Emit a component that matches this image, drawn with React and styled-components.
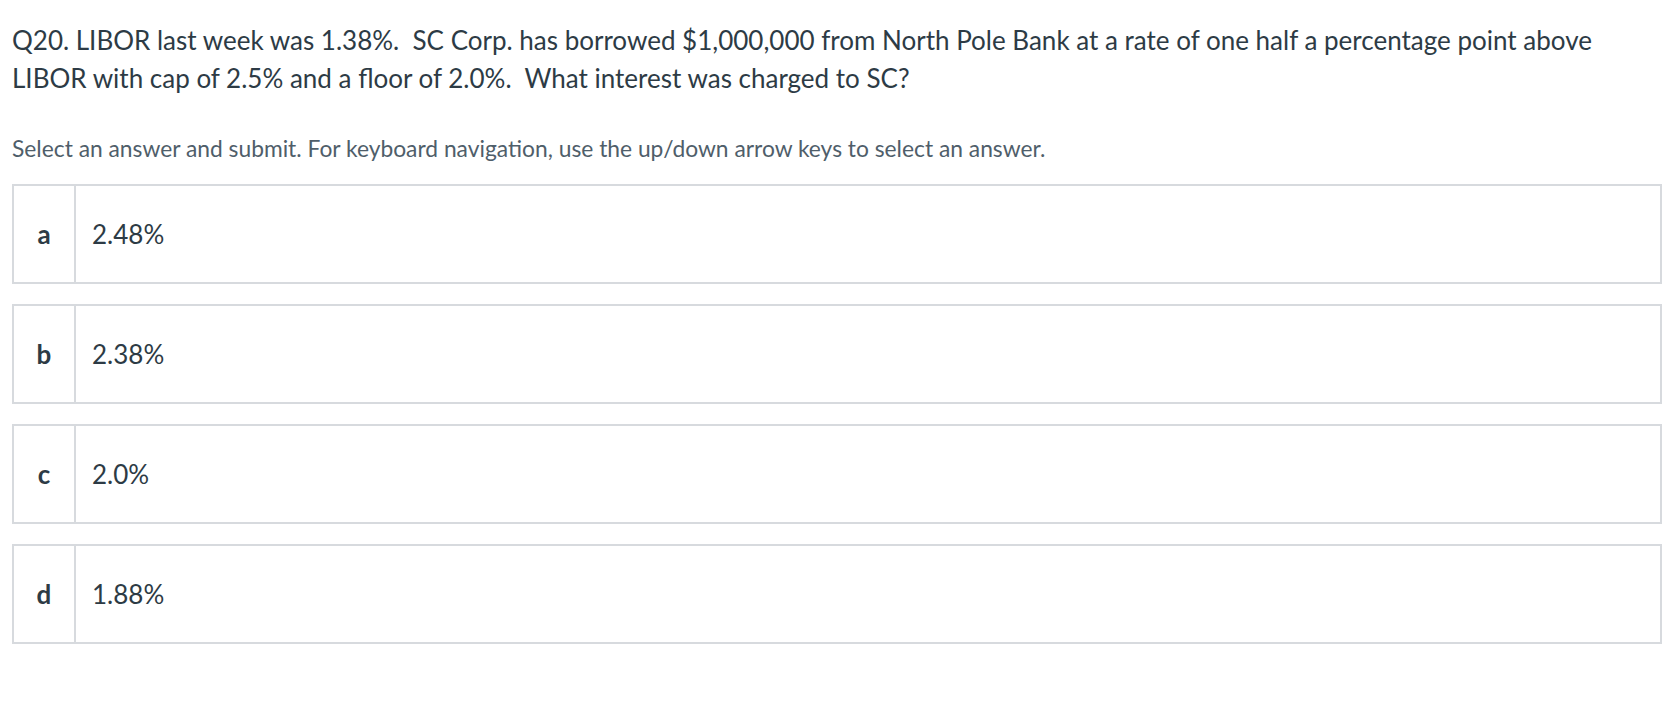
import React from 'react'
import styled, { createGlobalStyle } from 'styled-components'

const GlobalStyle = createGlobalStyle`
  html, body {
    margin: 0;
    padding: 0;
    background: #fff;
  }
  body {
    font-family: Lato, "Open Sans", sans-serif;
    color: #2d3b45;
  }
`

const Page = styled.div`
  padding: 22px 0 0 12px;
`

const Question = styled.p`
  margin: 0;
  width: 1590px;
  font-size: 26px;
  line-height: 37.5px;
  color: #2d3b45;
`

const Hint = styled.p`
  margin: 36px 0 0 0;
  font-size: 22.8px;
  line-height: 30px;
  color: #4f5e6a;
`

const Answers = styled.ul`
  list-style: none;
  margin: 21px 0 0 0;
  padding: 0;
  display: flex;
  flex-direction: column;
  gap: 20px;
`

const Answer = styled.li`
  display: flex;
  height: 100px;
  box-sizing: border-box;
  border: 2px solid #d7dade;
  cursor: pointer;
`

const Letter = styled.div`
  width: 60px;
  flex: none;
  display: flex;
  align-items: center;
  justify-content: center;
  border-right: 2px solid #d7dade;
  font-size: 26px;
  font-weight: 700;
  color: #2d3b45;
`

const Text = styled.div`
  display: flex;
  align-items: center;
  padding-left: 16px;
  font-size: 26px;
  color: #2d3b45;
`

const options = [
  { id: 'a', text: '2.48%' },
  { id: 'b', text: '2.38%' },
  { id: 'c', text: '2.0%' },
  { id: 'd', text: '1.88%' },
]

const App = () => {
  return (
    <>
      <GlobalStyle />
      <Page>
        <Question>
          Q20. LIBOR last week was 1.38%.&nbsp; SC Corp. has borrowed $1,000,000 from North Pole Bank at a rate of one half a percentage point above LIBOR with cap of 2.5% and a floor of 2.0%.&nbsp; What interest was charged to SC?
        </Question>
        <Hint>
          Select an answer and submit. For keyboard navigation, use the up/down arrow keys to select an answer.
        </Hint>
        <Answers>
          {options.map(({ id, text }) => (
            <Answer key={id}>
              <Letter>{id}</Letter>
              <Text>{text}</Text>
            </Answer>
          ))}
        </Answers>
      </Page>
    </>
  )
}

export default App
